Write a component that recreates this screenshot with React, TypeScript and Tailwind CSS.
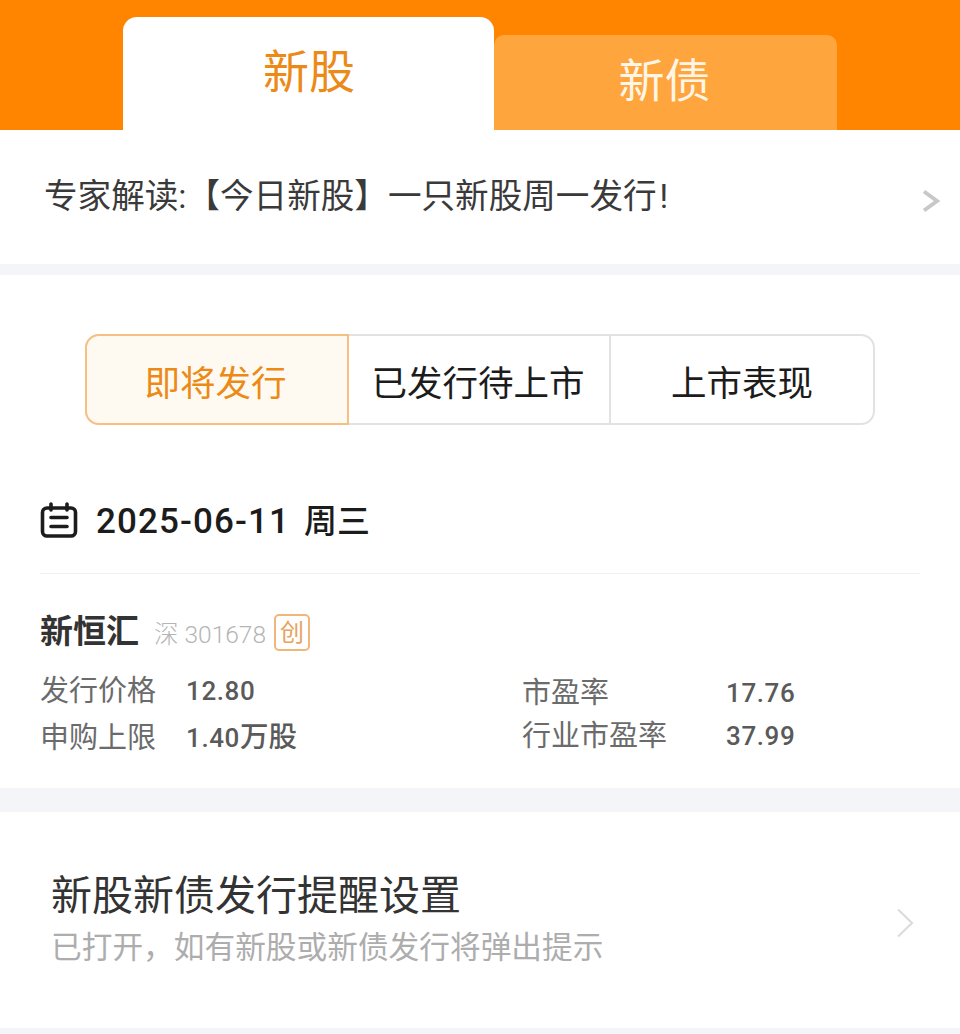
const font = "font-['Roboto','Noto_Sans_CJK_SC',sans-serif]";

function Divider({ height }: { height: string }) {
  return <div className={`${height} bg-[#f4f5f9]`} />;
}

function Stat({ label, value, unit, labelWidth }: { label: string; value: string; unit?: string; labelWidth: string }) {
  return (
    <div className="flex items-center">
      <span className={`${labelWidth} text-[29px] leading-[42px] text-[#6b6b6b]`}>{label}</span>
      <span className="text-[26px] leading-[42px] font-medium tracking-[0.6px] text-[#5a5a5a]">
        {value}
        {unit ? <span className="text-[28.5px] tracking-normal">{unit}</span> : null}
      </span>
    </div>
  );
}

export default function App() {
  return (
    <main className={`${font} h-[1034px] w-[960px] overflow-hidden bg-white`}>
      <header className="flex h-[130px] items-end bg-[#ff8500] pl-[123px]">
        <div className="flex h-[113px] w-[371px] items-start justify-center rounded-t-[14px] bg-white pt-[26px] pl-[1px] text-[46px] leading-[58px] text-[#ec8a17]">
          新股
        </div>
        <div className="flex h-[95px] w-[343px] items-start justify-center rounded-t-[10px] bg-[#ffa53d] pt-[17px] pr-[2px] text-[46px] leading-[58px] text-[#fff6e8]">
          新债
        </div>
      </header>

      <section className="flex h-[134px] items-center justify-between pr-[19px] pl-[44px]">
        <p className="text-[33.6px] leading-[48px] text-[#3a3a3a]">
          专家解读:【今日新股】一只新股周一发行<span className="ml-[3px]">!</span>
        </p>
        <svg width="20" height="24" viewBox="0 0 20 24" fill="none" stroke="#c8c8c8" strokeWidth="4" className="mt-[7px]">
          <path d="M3 2.5 16 12 3 21.5" />
        </svg>
      </section>

      <Divider height="h-[11px]" />

      <section className="h-[513px] px-[40px] pt-[59px]">
        <div className="mx-[45px] flex h-[91px] w-[790px] rounded-[14px] border-2 border-[#e2e2e2] text-[35.5px] leading-none text-[#1c1c1c]">
          <div className="-m-[2px] flex w-[264px] items-center justify-center rounded-l-[14px] border-2 border-[#f6c083] bg-[#fffaf1] pt-[10px] pr-[3px] text-[#ec8a17]">
            即将发行
          </div>
          <div className="flex w-[264px] items-center justify-center border-r-2 border-[#e2e2e2] pt-[10px]">已发行待上市</div>
          <div className="flex flex-1 items-center justify-center pt-[10px]">上市表现</div>
        </div>

        <div className="mt-[75px] flex h-[74px] items-start border-b border-[#f1f1f1]">
          <svg width="38" height="38" viewBox="0 0 38 38" fill="none" stroke="#1c1c1c" strokeWidth="3.6" strokeLinecap="round" className="mt-[2px]">
            <rect x="2.5" y="6" width="33" height="28" rx="4.5" />
            <path d="M11 2v6M27 2v6M11 15.5h16M11 24.5h16" />
          </svg>
          <span className="mt-[2px] ml-[18px] text-[35px] leading-[40px] font-medium tracking-[1.1px] text-[#1c1c1c]">2025-06-11</span>
          <span className="mt-[2px] ml-[14px] text-[33px] leading-[40px] font-medium text-[#1c1c1c]">周三</span>
        </div>

        <div className="mt-[35px] flex items-start">
          <span className="text-[33px] leading-[46px] font-bold text-[#333333]">新恒汇</span>
          <span className="mt-[3px] ml-[15px] text-[24.5px] leading-[46px] font-light text-[#b5b5b5]">深 301678</span>
          <span className="mt-[5px] ml-[8px] flex h-[37px] w-[36px] items-center justify-center rounded-[5px] border-2 border-[#f0b67a] text-[24px] leading-none text-[#e9a25c]">
            创
          </span>
        </div>

        <div className="mt-[12px] grid grid-cols-[482px_1fr]">
          <div className="flex flex-col gap-[5px]">
            <Stat label="发行价格" value="12.80" labelWidth="w-[146px]" />
            <Stat label="申购上限" value="1.40" unit="万股" labelWidth="w-[146px]" />
          </div>
          <div className="flex flex-col gap-[1px] pt-[2px]">
            <Stat label="市盈率" value="17.76" labelWidth="w-[204px]" />
            <Stat label="行业市盈率" value="37.99" labelWidth="w-[204px]" />
          </div>
        </div>
      </section>

      <Divider height="h-[24px]" />

      <section className="flex h-[216px] items-center justify-between pr-[46px] pl-[51px]">
        <div className="-mt-[1px]">
          <h2 className="text-[41px] leading-[54px] text-[#333333]">新股新债发行提醒设置</h2>
          <p className="mt-[3px] text-[30.7px] leading-[44px] text-[#adadad]">已打开，如有新股或新债发行将弹出提示</p>
        </div>
        <svg width="18" height="30" viewBox="0 0 18 30" fill="none" stroke="#dcdcdc" strokeWidth="2.2" className="mt-[6px]">
          <path d="M2 1.5 16 15 2 28.5" />
        </svg>
      </section>

      <Divider height="h-[6px]" />
    </main>
  );
}
